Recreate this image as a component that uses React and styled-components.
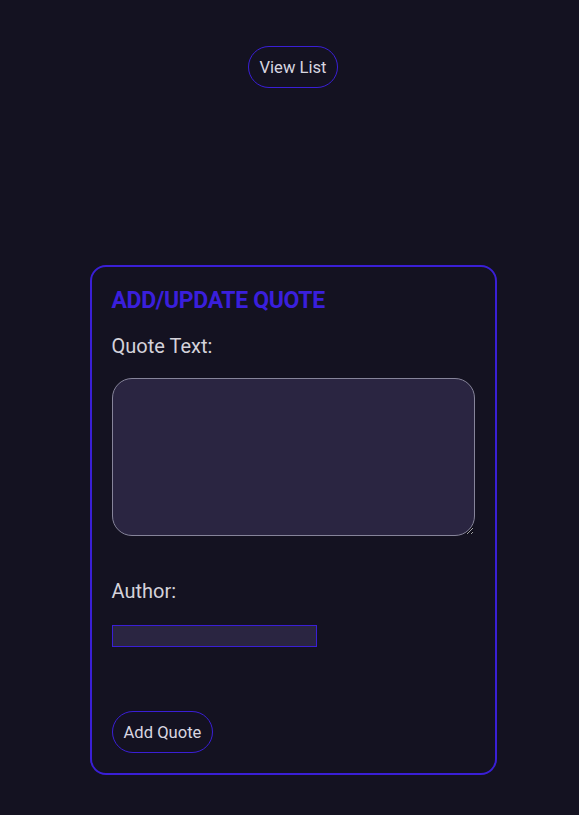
import React from "react";
import styled, { createGlobalStyle } from "styled-components";

const GlobalStyle = createGlobalStyle`
  html, body {
    margin: 0;
    padding: 0;
    background: #141221;
    font-family: Roboto, "Liberation Sans", sans-serif;
  }
`;

const Page = styled.div`
  min-height: 815px;
  padding: 46px 0 0 7px;
  box-sizing: border-box;
  display: flex;
  flex-direction: column;
  align-items: center;
`;

const PillButton = styled.button`
  height: 42px;
  padding: 0 11px;
  border: 1px solid #3a1fd6;
  border-radius: 21px;
  background: transparent;
  color: #d8d6e0;
  font-family: Roboto, "Liberation Sans", sans-serif;
  font-size: 16.6px;
  cursor: pointer;
`;

const Card = styled.form`
  margin-top: 177px;
  width: 407px;
  box-sizing: border-box;
  padding: 20px 20px 20px;
  border: 2px solid #3a1fd6;
  border-radius: 16px;
  display: flex;
  flex-direction: column;
  align-items: flex-start;
`;

const Heading = styled.h2`
  margin: 0;
  font-size: 23px;
  line-height: 27px;
  font-weight: 700;
  letter-spacing: -0.35px;
  color: #3a1fdc;
`;

const Label = styled.label`
  display: block;
  margin-top: ${(p) => p.$top}px;
  font-size: 20px;
  line-height: 24px;
  color: #d4d2db;
`;

const TextArea = styled.textarea`
  margin-top: 20px;
  width: 363px;
  height: 158px;
  box-sizing: border-box;
  border: 1px solid #86849a;
  border-radius: 20px;
  background: #2a2541;
  color: #ddd;
  outline: none;
`;

const TextInput = styled.input`
  margin-top: 22px;
  width: 205px;
  height: 22px;
  box-sizing: border-box;
  border: 1px solid #3a1fd6;
  background: #2a2541;
  color: #ddd;
  outline: none;
`;

const SubmitButton = styled(PillButton)`
  margin-top: 64px;
`;

export default function App() {
  return (
    <>
      <GlobalStyle />
      <Page>
        <PillButton type="button">View List</PillButton>
        <Card onSubmit={(e) => e.preventDefault()}>
          <Heading>ADD/UPDATE QUOTE</Heading>
          <Label $top={20}>Quote Text:</Label>
          <TextArea />
          <Label $top={43}>Author:</Label>
          <TextInput type="text" />
          <SubmitButton type="submit">Add Quote</SubmitButton>
        </Card>
      </Page>
    </>
  );
}
